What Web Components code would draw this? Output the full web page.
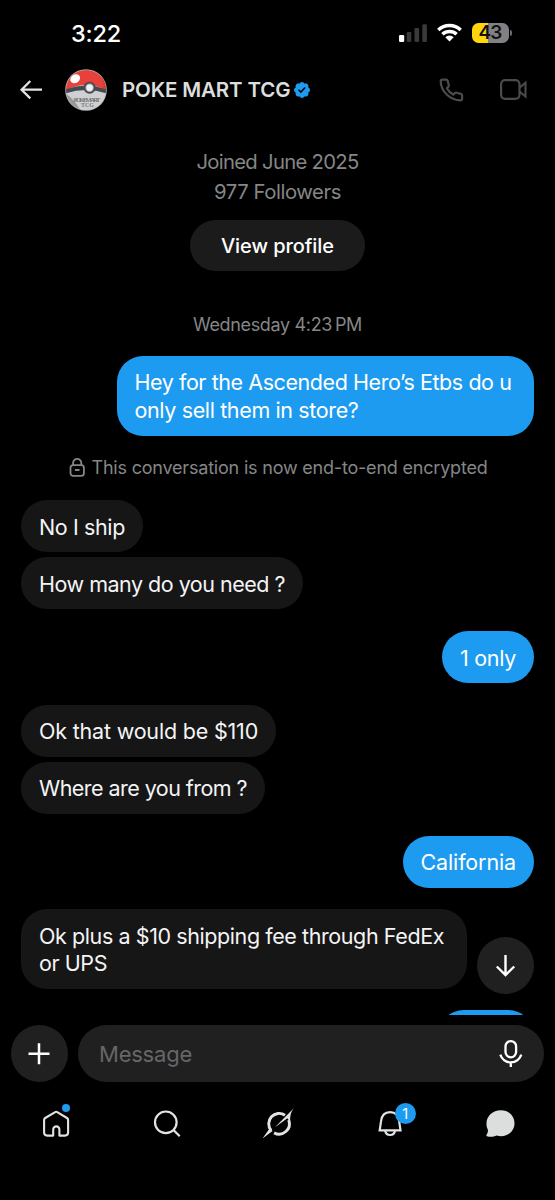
<!DOCTYPE html>
<html lang="en">
<head>
<meta charset="utf-8">
<meta name="viewport" content="width=device-width">
<title>Messages</title>
<style>
html,body{margin:0;background:#000}
body{font-family:Inter,"Liberation Sans",sans-serif;color:#e7e9ea}
</style>
</head>
<body>
<chat-app></chat-app>
<script>
const define = (name, html, init) => {
  const t = document.createElement('template');
  t.innerHTML = html;
  customElements.define(name, class extends HTMLElement {
    constructor() {
      super();
      this.attachShadow({mode: 'open'}).append(t.content.cloneNode(true));
    }
    connectedCallback() { if (init) init(this, this.shadowRoot); }
  });
};

/* One line of text, tracked so that it fills the width given in "w". */
define('fit-line', `<style>:host{display:block;white-space:pre}span{display:inline-block}</style><span><slot></slot></span>`,
  (el, root) => {
    const s = root.querySelector('span');
    const w = parseFloat(el.getAttribute('w'));
    const n = el.textContent.length;
    el.style.width = w + 'px';
    s.style.letterSpacing = '0px';
    s.style.letterSpacing = ((w - s.getBoundingClientRect().width) / n).toFixed(3) + 'px';
  });

const icons = {
  back: [26, 24, `<path d="M24 11.700H4M12.300 3 3.600 11.700l8.700 8.700" fill="none" stroke="#e2e3e3" stroke-width="2.300"/>`],
  phone: [28, 28, `<path d="M4.300 3.700h3.900q1.200 0 1.500 1.200l1.100 4.100q.3 1.100-.6 1.900l-1.300 1.300c1.500 2.900 3.500 4.900 6.400 6.400l1.400-1.400q.8-.8 1.900-.5l4.300 1.200q1.200.3 1.200 1.500v3.400q0 1.600-1.700 1.600C11.800 24.200 3 15.300 2.700 5.500q0-1.800 1.600-1.800Z" fill="none" stroke="#4b4b4c" stroke-width="2.200" stroke-linejoin="round"/>`],
  video: [30, 24, `<rect x="2.100" y="2.200" width="18.400" height="18.600" rx="4" fill="none" stroke="#4b4b4c" stroke-width="2.200"/><path d="M20.500 9.700 26.500 4.700v13.800l-6-5" fill="none" stroke="#4b4b4c" stroke-width="2.100"/>`],
  verified: [16, 16, `<svg viewBox="1.600 1.600 18.800 18.800" width="16" height="16"><path fill="#1d9bf0" d="M20.396 11c-.018-.646-.215-1.275-.57-1.816-.354-.54-.852-.972-1.438-1.246.223-.607.27-1.264.14-1.897-.131-.634-.437-1.218-.882-1.687-.47-.445-1.053-.75-1.687-.882-.633-.13-1.29-.083-1.897.14-.273-.587-.704-1.086-1.245-1.44S11.647 1.62 11 1.604c-.646.017-1.273.213-1.813.568s-.969.854-1.24 1.44c-.608-.223-1.267-.272-1.902-.14-.635.13-1.22.436-1.69.882-.445.47-.749 1.055-.878 1.688-.13.633-.08 1.29.144 1.896-.587.274-1.087.705-1.443 1.245-.356.54-.555 1.17-.574 1.817.02.647.218 1.276.574 1.817.356.54.856.972 1.443 1.245-.224.606-.274 1.263-.144 1.896.13.634.433 1.218.877 1.688.47.443 1.054.747 1.687.878.633.132 1.29.084 1.897-.136.274.586.705 1.084 1.246 1.439.54.354 1.17.551 1.816.569.647-.016 1.276-.213 1.817-.567s.972-.854 1.245-1.44c.604.239 1.266.296 1.903.164.636-.132 1.22-.447 1.68-.907.46-.46.776-1.044.908-1.681s.075-1.299-.165-1.903c.586-.274 1.084-.705 1.439-1.246.354-.54.551-1.17.569-1.816zM9.662 14.85l-3.429-3.428 1.293-1.302 2.072 2.072 4.4-4.794 1.347 1.246z"/></svg>`],
  lock: [18, 20, `<g fill="none" stroke="#858687" stroke-width="1.800"><rect x="2.500" y="7.200" width="13.400" height="10.600" rx="2.600"/><path d="M5.100 7.200V5a4.100 4.100 0 0 1 8.200 0v2.200M6.900 12h4.600"/></g>`],
  signal: [30, 20, `<rect x="1" y="12" width="5.200" height="7" rx="1.200" fill="#fff"/><g fill="#3a3a3b"><rect x="8.700" y="9" width="4.600" height="10" rx="1.200"/><rect x="16.500" y="5" width="4.600" height="14" rx="1.200"/><rect x="24.300" y="1.200" width="4.600" height="17.800" rx="1.200"/></g>`],
  wifi: [26, 20, `<g fill="none" stroke="#fff" stroke-width="3.400"><path d="M2.300 7a16 16 0 0 1 22.400 0"/><path d="M6.400 11.300a10.300 10.300 0 0 1 14.200 0"/></g><path d="M9.300 14.200a6.100 6.100 0 0 1 8.400 0L13.500 18.500Z" fill="#fff"/>`],
  down: [28, 28, `<path d="M13.500 4v20M4.800 15.500 13.500 24l8.700-8.500" fill="none" stroke="#fff" stroke-width="2.400"/>`],
  plus: [28, 28, `<path d="M14 3.300v21M3.500 13.800h21" stroke="#fff" stroke-width="2.500"/>`],
  mic: [28, 32, `<g fill="none" stroke="#fff" stroke-width="2.300"><rect x="8.500" y="3.100" width="10.600" height="16.200" rx="5.300"/><path d="M3.300 16.700a11 11 0 0 0 21 0M13.800 24.200v4.700"/></g>`],
  home: [40, 40, `<path d="M17.700 31.600V25.500a3 3 0 0 1 6.200 0v6.100h5.600q3.100 0 3.100-3V16q0-1.300-1.100-2l-9.800-5.900q-1-.6-2 0L9.700 14q-1.100.7-1.100 2v12.600q0 3 3.100 3Z" fill="none" stroke="#e2e3e3" stroke-width="2.100" stroke-linejoin="round"/>`],
  search: [40, 40, `<g fill="none" stroke="#e2e3e3" stroke-width="2.200"><circle cx="19.300" cy="18.300" r="10.800"/><path d="m26.700 25.700 6.500 6.500"/></g>`],
  grok: [40, 40, `<g fill="none" stroke="#e2e3e3" stroke-width="2.900"><path d="M13.600 26.400A10.400 10.400 0 0 1 27.500 11.200"/><path d="M16.600 28.900A10.400 10.400 0 0 0 31.200 16"/></g><path d="M5 34.500 12.400 24l2.700 2.900Z" fill="#e2e3e3"/><path d="M36.500 4 17.500 23.200l12.400-9 2.800 4C32.400 12 33.400 8 36.500 4Z" fill="#e2e3e3"/>`],
  bell: [40, 40, `<g fill="none" stroke="#e2e3e3" stroke-width="2.200"><path d="m11.200 26.400 1.300-9C13.200 11.400 16.400 8.200 21.600 8.200s8.400 3.200 9.100 9.200l1.300 9Z"/><path d="M16.700 27a5 5 0 0 0 9.800 0"/></g>`],
  bubble: [40, 40, `<path d="M21.300 6.200C29.300 6.200 35 12 35 19.200S29.300 32.200 21.700 32.200q-2.300 0-4.500-.8c-3 1.600-7 1.600-9.700.8-.8-.3-.8-.9-.4-1.500 1.100-1.600 1.500-3 1.300-4.700A12.600 12.600 0 0 1 7 19.200C7 12 13.300 6.200 21.300 6.200Z" fill="#dcdddd"/>`],
  ball: [42, 42, `<defs><clipPath id="c"><circle cx="21" cy="21" r="20"/></clipPath></defs><circle cx="21" cy="21" r="20.800" fill="#aeb0b1"/><g clip-path="url(#c)"><rect width="42" height="42" fill="#cfd0d1"/><path d="M0 24q9 6 14 15 3 4 9 3H0Z" fill="#98999b"/><path d="M0 0h42v22Q21 10 0 22Z" fill="#e8403a"/><path d="M26 0q14 6 12 20l5 2V0Z" fill="#d93832"/><path d="M0 20.500Q21 12.500 42 20.500v4.200Q21 17.500 0 24.700Z" fill="#454a50"/><ellipse cx="10.200" cy="9.700" rx="5.200" ry="4.200" transform="rotate(-35 10.200 9.700)" fill="#fff"/></g><circle cx="24.600" cy="18.800" r="6" fill="#454a50"/><circle cx="24.600" cy="18.800" r="4.200" fill="#a9abad"/><circle cx="24.600" cy="18.800" r="3.200" fill="#f1f1f1"/><g fill="#77797b" font-family="Liberation Serif,serif" font-weight="700" text-anchor="middle"><text x="22" y="32.500" font-size="7" textLength="27">POKEMART</text><text x="22.500" y="38.300" font-size="6">TCG</text></g>`]
};
define('x-icon', `<style>:host{display:block;flex:none}svg{display:block;overflow:visible}</style>`, (el, root) => {
  const [w, h, body] = icons[el.getAttribute('name')];
  const t = document.createElement('template');
  t.innerHTML = `<svg width="${w}" height="${h}" viewBox="0 0 ${w} ${h}">${body}</svg>`;
  root.append(t.content);
});

define('status-bar', `<style>
:host{display:flex;height:66px;box-sizing:border-box;padding:23px 43px 0 71px;align-items:flex-start}
.time{font-size:23.5px;font-weight:550;line-height:21px;color:#fff;margin-right:auto}
.signal{margin-right:8px}.wifi{margin-right:9.500px}
.bat{width:37px;height:20px;border-radius:6.500px;background:linear-gradient(90deg,#ffd60a 16px,#818183 16px);color:#111;font-size:19px;font-weight:600;line-height:20px;display:flex;justify-content:center}
.cap{width:2.500px;height:6px;margin:7px 0 0 1px;border-radius:0 3px 3px 0;background:#6b6b6d}
</style><fit-line class="time" w="50">3:22</fit-line><x-icon class="signal" name="signal"></x-icon><x-icon class="wifi" name="wifi"></x-icon><div class="bat"><fit-line w="23">43</fit-line></div><div class="cap"></div>`);

define('chat-header', `<style>
:host{display:flex;height:47px;align-items:center;padding:0 26px 0 18px}
.ball{margin:0 15.500px 0 20.500px}
.name{font-size:20.500px;font-weight:640;color:#dcdddd}
.v{margin:0 auto 0 3.500px}.p{margin-right:33px}
</style><x-icon name="back"></x-icon><x-icon class="ball" name="ball"></x-icon><fit-line class="name" w="168.500">POKE MART TCG</fit-line><x-icon class="v" name="verified"></x-icon><x-icon class="p" name="phone"></x-icon><x-icon name="video"></x-icon>`);

define('profile-summary', `<style>
:host{display:flex;flex:none;flex-direction:column;align-items:center;padding-top:34px;font-size:20.300px;line-height:30px;color:#858687}
button{all:unset;margin-top:13px;width:174.500px;height:51px;border-radius:26px;background:#1b1b1c;color:#fff;font-weight:550;font-size:20px;display:flex;align-items:center;justify-content:center}
</style><fit-line w="162">Joined June 2025</fit-line><fit-line w="127">977 Followers</fit-line><button><fit-line w="113">View profile</fit-line></button>`);

define('chat-bubble', `<style>
:host{display:block;flex:none;box-sizing:border-box;align-self:flex-start;width:fit-content;padding:13.700px 18px 11.300px;border-radius:26px;background:#161617;color:#f4f4f5;font-size:21.500px;line-height:27.200px;margin-bottom:4.700px}
:host([sent]){align-self:flex-end;background:#1d9bf0;color:#fff}
:host([last]){margin-bottom:21.700px}
</style><slot></slot>`);

define('chat-note', `<style>
:host{display:flex;flex:none;align-items:center;justify-content:center;font-size:18px;line-height:24px;color:#858687}
</style><slot></slot>`);

define('chat-thread', `<style>
:host{display:flex;flex:none;flex-direction:column;height:902px;overflow:hidden;padding:0 21px;box-sizing:border-box}
.date{margin:41.500px 0 19.200px}.lock{margin:20px 0 20.500px;gap:6px}
.wide{width:417.500px;padding-bottom:11.900px;margin-bottom:0}.long{width:446px;padding-bottom:11.900px;margin-bottom:20.500px}
</style>
<profile-summary></profile-summary>
<chat-note class="date"><fit-line w="169">Wednesday 4:23&#8239;PM</fit-line></chat-note>
<chat-bubble sent class="wide"><fit-line w="377">Hey for the Ascended Hero’s Etbs do u</fit-line><fit-line w="224">only sell them in store?</fit-line></chat-bubble>
<chat-note class="lock"><x-icon name="lock"></x-icon><fit-line w="396">This conversation is now end-to-end encrypted</fit-line></chat-note>
<chat-bubble><fit-line w="86">No I ship</fit-line></chat-bubble>
<chat-bubble last><fit-line w="246">How many do you need ?</fit-line></chat-bubble>
<chat-bubble sent last><fit-line w="56">1 only</fit-line></chat-bubble>
<chat-bubble><fit-line w="219">Ok that would be $110</fit-line></chat-bubble>
<chat-bubble last><fit-line w="208">Where are you from ?</fit-line></chat-bubble>
<chat-bubble sent last><fit-line w="95.500">California</fit-line></chat-bubble>
<chat-bubble class="long"><fit-line w="405">Ok plus a $10 shipping fee through FedEx</fit-line><fit-line w="68">or UPS</fit-line></chat-bubble>
<chat-bubble sent><fit-line w="60"> </fit-line></chat-bubble>`);

define('message-composer', `<style>
:host{display:flex;gap:10.500px;padding:10px 11px 0 10.500px;height:57px}
.add{width:57px;height:57px;border-radius:50%;background:#202021;display:grid;place-items:center}
.field{flex:1;box-sizing:border-box;border-radius:28.500px;background:#202021;display:flex;align-items:center;justify-content:space-between;padding:0 19.500px 0 21px;font-size:22px;color:#666768}
</style><div class="add"><x-icon name="plus"></x-icon></div><div class="field"><fit-line w="93">Message</fit-line><x-icon name="mic"></x-icon></div>`);

define('tab-bar', `<style>
:host{display:grid;grid-template-columns:repeat(5,111px);padding-top:22px;justify-items:center;margin-left:-.6px}
div{position:relative}
x-icon{transform:translateX(.5px)}
.dot{position:absolute;left:27px;top:0;width:8px;height:8px;border-radius:50%;background:#1d9bf0}
.n{position:absolute;left:26.700px;top:-1.200px;width:21px;height:21px;border-radius:50%;background:#1d9bf0;color:#fff;font-size:14.500px;line-height:21px;text-align:center}
</style><div><x-icon name="home"></x-icon><span class="dot"></span></div><div><x-icon name="search"></x-icon></div><div><x-icon name="grok"></x-icon></div><div><x-icon name="bell"></x-icon><span class="n">1</span></div><div><x-icon name="bubble"></x-icon></div>`);

define('chat-app', `<style>
:host{display:flex;flex-direction:column;position:relative;width:555px;height:1200px;overflow:hidden;background:#000}
.jump{position:absolute;left:477px;top:936.700px;width:57px;height:57px;border-radius:50%;background:#202021;display:grid;place-items:center}
</style><status-bar></status-bar><chat-header></chat-header><chat-thread></chat-thread><div class="jump"><x-icon name="down"></x-icon></div><message-composer></message-composer><tab-bar></tab-bar>`);
</script>
</body>
</html>
